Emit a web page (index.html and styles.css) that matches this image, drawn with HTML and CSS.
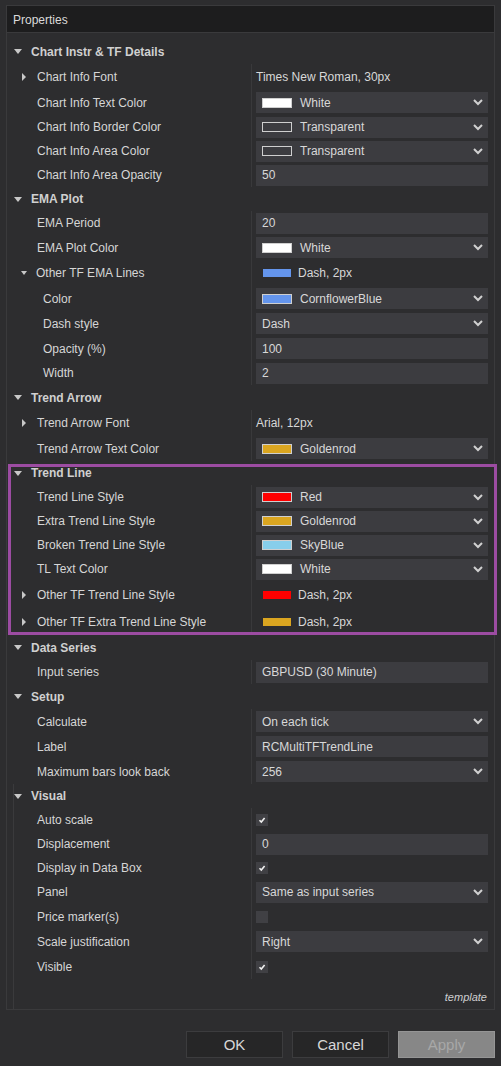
FILE: index.html
```html
<!DOCTYPE html>
<html>
<head>
<meta charset="utf-8">
<link rel="stylesheet" href="styles.css">
</head>
<body>
<div class="dialog">
  <div class="header">Properties</div>
  <div class="panel">
    <div class="tree">
      <div class="row grp h25"><div class="lab"><span class="tri-g"></span>Chart Instr &amp; TF Details</div></div>
      <div class="row h26"><div class="lab exp"><span class="tri-r"></span>Chart Info Font</div><div class="val"><span class="plain">Times New Roman, 30px</span></div></div>
      <div class="row h25"><div class="lab">Chart Info Text Color</div><div class="val"><div class="box sel"><span class="sw" style="background:#ffffff"></span><span class="bt">White</span><svg class="chev" viewBox="0 0 10 7"><polyline points="1,1 5,5 9,1"/></svg></div></div></div>
      <div class="row h24"><div class="lab">Chart Info Border Color</div><div class="val"><div class="box sel"><span class="sw"></span><span class="bt">Transparent</span><svg class="chev" viewBox="0 0 10 7"><polyline points="1,1 5,5 9,1"/></svg></div></div></div>
      <div class="row h24"><div class="lab">Chart Info Area Color</div><div class="val"><div class="box sel"><span class="sw"></span><span class="bt">Transparent</span><svg class="chev" viewBox="0 0 10 7"><polyline points="1,1 5,5 9,1"/></svg></div></div></div>
      <div class="row h24"><div class="lab">Chart Info Area Opacity</div><div class="val"><div class="box"><span class="in">50</span></div></div></div>

      <div class="row grp h24"><div class="lab"><span class="tri-g"></span>EMA Plot</div></div>
      <div class="row h24"><div class="lab">EMA Period</div><div class="val"><div class="box"><span class="in">20</span></div></div></div>
      <div class="row h25"><div class="lab">EMA Plot Color</div><div class="val"><div class="box sel"><span class="sw" style="background:#ffffff"></span><span class="bt">White</span><svg class="chev" viewBox="0 0 10 7"><polyline points="1,1 5,5 9,1"/></svg></div></div></div>
      <div class="row h26"><div class="lab open"><span class="tri-d"></span>Other TF EMA Lines</div><div class="val"><span class="sw2" style="background:#6495ed"></span><span class="plain">Dash, 2px</span></div></div>
      <div class="row h25"><div class="lab sub">Color</div><div class="val"><div class="box sel"><span class="sw" style="background:#6495ed"></span><span class="bt">CornflowerBlue</span><svg class="chev" viewBox="0 0 10 7"><polyline points="1,1 5,5 9,1"/></svg></div></div></div>
      <div class="row h25"><div class="lab sub">Dash style</div><div class="val"><div class="box sel"><span class="in">Dash</span><svg class="chev" viewBox="0 0 10 7"><polyline points="1,1 5,5 9,1"/></svg></div></div></div>
      <div class="row h25"><div class="lab sub">Opacity (%)</div><div class="val"><div class="box"><span class="in">100</span></div></div></div>
      <div class="row h24"><div class="lab sub">Width</div><div class="val"><div class="box"><span class="in">2</span></div></div></div>

      <div class="row grp h25"><div class="lab"><span class="tri-g"></span>Trend Arrow</div></div>
      <div class="row h26"><div class="lab exp"><span class="tri-r"></span>Trend Arrow Font</div><div class="val"><span class="plain">Arial, 12px</span></div></div>
      <div class="row h25"><div class="lab">Trend Arrow Text Color</div><div class="val"><div class="box sel"><span class="sw" style="background:#daa520"></span><span class="bt">Goldenrod</span><svg class="chev" viewBox="0 0 10 7"><polyline points="1,1 5,5 9,1"/></svg></div></div></div>

      <div class="row grp h24"><div class="lab"><span class="tri-g"></span>Trend Line</div></div>
      <div class="row h24"><div class="lab">Trend Line Style</div><div class="val"><div class="box sel"><span class="sw" style="background:#ff0000"></span><span class="bt">Red</span><svg class="chev" viewBox="0 0 10 7"><polyline points="1,1 5,5 9,1"/></svg></div></div></div>
      <div class="row h24"><div class="lab">Extra Trend Line Style</div><div class="val"><div class="box sel"><span class="sw" style="background:#daa520"></span><span class="bt">Goldenrod</span><svg class="chev" viewBox="0 0 10 7"><polyline points="1,1 5,5 9,1"/></svg></div></div></div>
      <div class="row h24"><div class="lab">Broken Trend Line Style</div><div class="val"><div class="box sel"><span class="sw" style="background:#87ceeb"></span><span class="bt">SkyBlue</span><svg class="chev" viewBox="0 0 10 7"><polyline points="1,1 5,5 9,1"/></svg></div></div></div>
      <div class="row h24"><div class="lab">TL Text Color</div><div class="val"><div class="box sel"><span class="sw" style="background:#ffffff"></span><span class="bt">White</span><svg class="chev" viewBox="0 0 10 7"><polyline points="1,1 5,5 9,1"/></svg></div></div></div>
      <div class="row h27"><div class="lab exp"><span class="tri-r"></span>Other TF Trend Line Style</div><div class="val"><span class="sw2" style="background:#ff0000"></span><span class="plain">Dash, 2px</span></div></div>
      <div class="row h27"><div class="lab exp"><span class="tri-r"></span>Other TF Extra Trend Line Style</div><div class="val"><span class="sw2" style="background:#daa520"></span><span class="plain">Dash, 2px</span></div></div>

      <div class="row grp h25"><div class="lab"><span class="tri-g"></span>Data Series</div></div>
      <div class="row h24"><div class="lab">Input series</div><div class="val"><div class="box"><span class="in">GBPUSD (30 Minute)</span></div></div></div>

      <div class="row grp h25"><div class="lab"><span class="tri-g"></span>Setup</div></div>
      <div class="row h25"><div class="lab">Calculate</div><div class="val"><div class="box sel"><span class="in">On each tick</span><svg class="chev" viewBox="0 0 10 7"><polyline points="1,1 5,5 9,1"/></svg></div></div></div>
      <div class="row h25"><div class="lab">Label</div><div class="val"><div class="box"><span class="in">RCMultiTFTrendLine</span></div></div></div>
      <div class="row h25"><div class="lab">Maximum bars look back</div><div class="val"><div class="box sel"><span class="in">256</span><svg class="chev" viewBox="0 0 10 7"><polyline points="1,1 5,5 9,1"/></svg></div></div></div>

      <div class="lined">
        <div class="row grp h24"><div class="lab"><span class="tri-g"></span>Visual</div></div>
        <div class="row h24"><div class="lab">Auto scale</div><div class="val"><span class="cb"><svg viewBox="0 0 12 12"><polyline points="3.5,6.2 5.3,8 8.6,4"/></svg></span></div></div>
        <div class="row h24"><div class="lab">Displacement</div><div class="val"><div class="box"><span class="in">0</span></div></div></div>
        <div class="row h24"><div class="lab">Display in Data Box</div><div class="val"><span class="cb"><svg viewBox="0 0 12 12"><polyline points="3.5,6.2 5.3,8 8.6,4"/></svg></span></div></div>
        <div class="row h24"><div class="lab">Panel</div><div class="val"><div class="box sel"><span class="in">Same as input series</span><svg class="chev" viewBox="0 0 10 7"><polyline points="1,1 5,5 9,1"/></svg></div></div></div>
        <div class="row h25"><div class="lab">Price marker(s)</div><div class="val"><span class="cb"></span></div></div>
        <div class="row h25"><div class="lab">Scale justification</div><div class="val"><div class="box sel"><span class="in">Right</span><svg class="chev" viewBox="0 0 10 7"><polyline points="1,1 5,5 9,1"/></svg></div></div></div>
        <div class="row h25"><div class="lab">Visible</div><div class="val"><span class="cb"><svg viewBox="0 0 12 12"><polyline points="3.5,6.2 5.3,8 8.6,4"/></svg></span></div></div>
        <div class="tmpl">template</div>
      </div>
    </div>
  </div>
  <div class="buttons">
    <div class="btn">OK</div>
    <div class="btn">Cancel</div>
    <div class="btn apply">Apply</div>
  </div>
</div>
<div class="highlight"></div>
</body>
</html>
```

FILE: styles.css
```css
html, body {
  margin: 0;
  padding: 0;
}
body {
  width: 501px;
  height: 1066px;
  background: #2d2d2f;
  font-family: "Liberation Sans", Arial, sans-serif;
  font-size: 12px;
  color: #d6d6d6;
  position: relative;
  overflow: hidden;
}
.dialog {
  padding: 5px 6px 0 6px;
}
.header {
  box-sizing: border-box;
  height: 28px;
  background: #1d1d1e;
  border: 1px solid #3a3a3c;
  padding: 1px 0 0 6px;
  display: flex;
  align-items: center;
  color: #dadada;
}
.panel {
  border: 1px solid #3a3a3c;
  border-top: none;
}
.tree {
  padding: 6px 0 0 7px;
}
.lined {
  margin-left: -1px;
  border-left: 1px solid #3a3a3c;
}
.row {
  display: grid;
  grid-template-columns: 237px 1fr;
  align-items: stretch;
}
.h24 { height: 24px; }
.h25 { height: 25px; }
.h26 { height: 26px; }
.h27 { height: 27px; }
.lab {
  display: flex;
  align-items: center;
  padding-left: 23px;
  white-space: nowrap;
  color: #d6d6d6;
}
.grp .lab {
  padding-left: 0;
  font-weight: bold;
  color: #d0d0d0;
  grid-column: 1 / 3;
}
.lab.exp { padding-left: 8px; }
.lab.open { padding-left: 7px; }
.lab.sub { padding-left: 29px; }
.tri-g {
  width: 0;
  height: 0;
  border-left: 4px solid transparent;
  border-right: 4px solid transparent;
  border-top: 5px solid #c8c8c8;
  margin-right: 9px;
}
.tri-r {
  width: 0;
  height: 0;
  border-top: 4px solid transparent;
  border-bottom: 4px solid transparent;
  border-left: 4px solid #c8c8c8;
  margin-right: 11px;
}
.tri-d {
  width: 0;
  height: 0;
  border-left: 3.5px solid transparent;
  border-right: 3.5px solid transparent;
  border-top: 4px solid #c8c8c8;
  margin-right: 9px;
}
.val {
  border-left: 1px solid #39393b;
  padding: 0 6px 0 4px;
  display: flex;
  align-items: center;
  min-width: 0;
}
.plain {
  color: #d8d8d8;
  white-space: nowrap;
}
.box {
  flex: 1;
  height: 21px;
  background: #3c3c40;
  display: flex;
  align-items: center;
  color: #d8d8d8;
  white-space: nowrap;
}
.in {
  padding-left: 6px;
  flex: 1;
}
.bt {
  margin-left: 8px;
  flex: 1;
}
.sw {
  box-sizing: border-box;
  width: 30px;
  height: 10px;
  margin-left: 6px;
  border: 1px solid #cfcfcf;
}
.sw2 {
  width: 28px;
  height: 8px;
  margin: 0 7px 0 7px;
}
.chev {
  width: 10px;
  height: 7px;
  margin-right: 5px;
  fill: none;
  stroke: #d0d0d0;
  stroke-width: 2;
}
.cb {
  width: 12px;
  height: 12px;
  background: #404044;
  display: flex;
}
.cb svg {
  width: 12px;
  height: 12px;
  fill: none;
  stroke: #f0f0f0;
  stroke-width: 1.6;
}
.tmpl {
  height: 30px;
  box-sizing: border-box;
  padding: 11px 7px 0 0;
  line-height: 14px;
  text-align: right;
  font-style: italic;
  font-size: 11px;
  color: #cfcfcf;
}
.buttons {
  display: flex;
  justify-content: flex-end;
  gap: 9px;
  margin-top: 21px;
}
.btn {
  box-sizing: border-box;
  width: 97px;
  height: 27px;
  background: #262627;
  border: 1px solid #3c3c3e;
  color: #d8d8d8;
  font-size: 15px;
  display: flex;
  align-items: center;
  justify-content: center;
}
.btn.apply {
  background: #878787;
  border-color: #959595;
  color: #a8a8a8;
}
.highlight {
  position: absolute;
  left: 8px;
  top: 464px;
  width: 489px;
  height: 171px;
  box-sizing: border-box;
  border: 3px solid #9c4ca2;
}
```
